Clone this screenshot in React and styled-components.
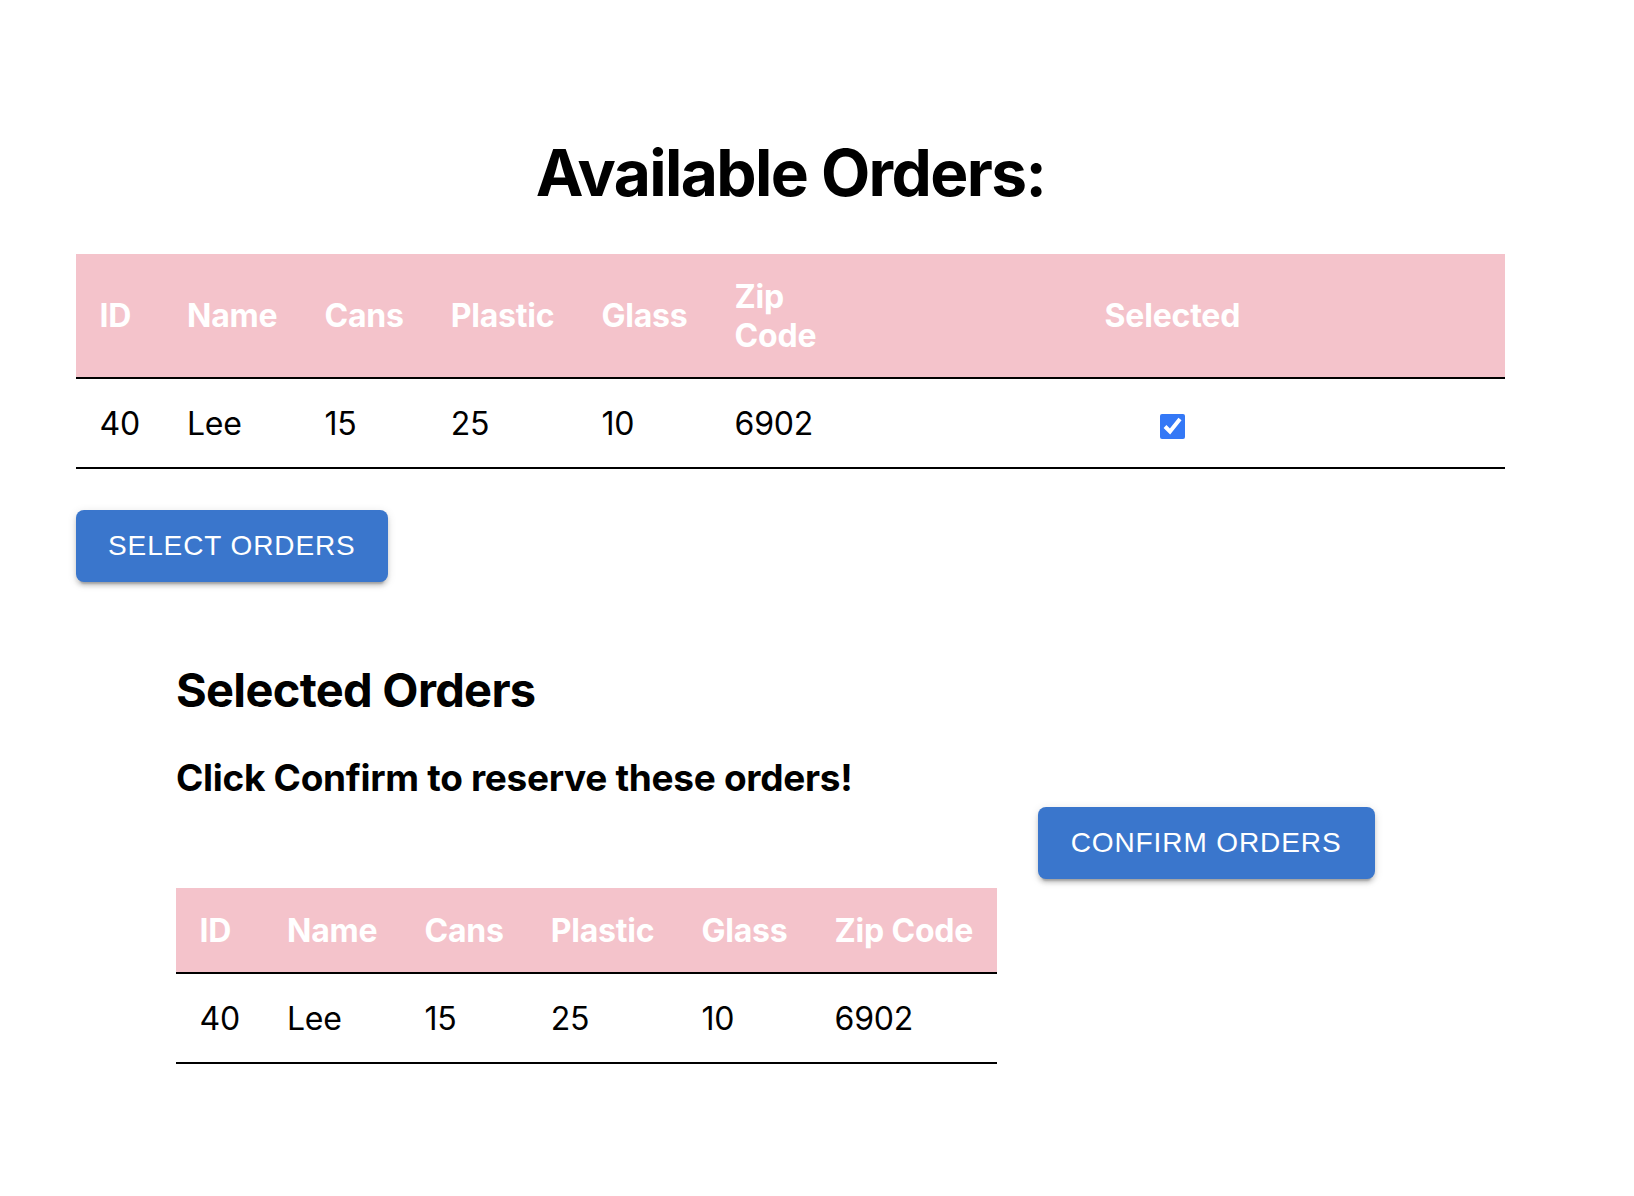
import React from "react";
import styled, { createGlobalStyle } from "styled-components";

const GlobalStyle = createGlobalStyle`
  html, body {
    margin: 0;
    padding: 0;
    background: #ffffff;
  }
  body {
    font-family: Inter, "Noto Sans", "DejaVu Sans", sans-serif;
    color: #000000;
  }
`;

const Page = styled.main`
  padding: 135px 0 120px 76px;
`;

const Container = styled.div`
  width: 1429px;
`;

const Title = styled.h1`
  margin: 0 0 42px;
  text-align: center;
  font-size: 64px;
  line-height: 1.2;
  font-weight: 700;
  letter-spacing: -1.6px;
`;

const Table = styled.table`
  border-collapse: collapse;
  width: ${(p) => (p.$full ? "100%" : "auto")};
`;

const HeadRow = styled.tr`
  background: #f4c3cb;
`;

const Th = styled.th`
  padding: 23px 23.5px 22px;
  font-size: 32px;
  line-height: 39px;
  font-weight: 700;
  letter-spacing: -0.2px;
  color: #ffffff;
  text-align: ${(p) => (p.$center ? "center" : "left")};
  border-bottom: 2px solid #000000;
  width: ${(p) => (p.$shrink ? "1%" : "auto")};
  vertical-align: middle;
`;

const Td = styled.td`
  padding: 25px 23.5px 24px;
  font-size: 32px;
  line-height: 39px;
  font-weight: 400;
  letter-spacing: -0.2px;
  text-align: ${(p) => (p.$center ? "center" : "left")};
  border-bottom: 2px solid #000000;
  vertical-align: middle;
`;

const Check = styled.input`
  width: 25px;
  height: 25px;
  margin: 0;
  accent-color: #3478f6;
  vertical-align: middle;
`;

const Button = styled.button`
  display: inline-flex;
  align-items: center;
  justify-content: center;
  height: 72px;
  padding: 0 ${(p) => p.$pad || 32}px;
  border: none;
  border-radius: 8px;
  background: #3a76cc;
  color: #ffffff;
  font-family: "Liberation Sans", Arial, sans-serif;
  font-size: 28px;
  font-weight: 400;
  letter-spacing: 0.9px;
  text-transform: uppercase;
  box-shadow: 0 6px 2px -4px rgba(0, 0, 0, 0.2), 0 4px 4px 0 rgba(0, 0, 0, 0.14),
    0 2px 10px 0 rgba(0, 0, 0, 0.12);
  cursor: pointer;
  flex-shrink: 0;
`;

const SelectBar = styled.div`
  margin-top: 41px;
`;

const SelectedSection = styled.section`
  display: flex;
  align-items: center;
  gap: 41px;
  margin-top: 40px;
  padding-left: 100px;
`;

const Column = styled.div`
  display: flex;
  flex-direction: column;
  align-items: flex-start;
`;

const SubTitle = styled.h2`
  margin: 40px 0 0;
  font-size: 47px;
  line-height: 1.2;
  font-weight: 700;
  letter-spacing: -0.7px;
`;

const Hint = styled.h3`
  margin: 38px 0 87px;
  font-size: 37px;
  line-height: 1.2;
  font-weight: 700;
  letter-spacing: -0.3px;
`;

const orders = [
  { id: 40, name: "Lee", cans: 15, plastic: 25, glass: 10, zip: 6902, selected: true },
];

const columns = ["ID", "Name", "Cans", "Plastic", "Glass", "Zip Code"];

function OrderCells({ order }) {
  return (
    <>
      <Td>{order.id}</Td>
      <Td>{order.name}</Td>
      <Td>{order.cans}</Td>
      <Td>{order.plastic}</Td>
      <Td>{order.glass}</Td>
      <Td>{order.zip}</Td>
    </>
  );
}

export default function App() {
  return (
    <>
      <GlobalStyle />
      <Page>
        <Container>
          <Title>Available Orders:</Title>
          <Table $full>
            <thead>
              <HeadRow>
                {columns.map((c) => (
                  <Th key={c} $shrink>
                    {c}
                  </Th>
                ))}
                <Th $center>Selected</Th>
              </HeadRow>
            </thead>
            <tbody>
              {orders.map((o) => (
                <tr key={o.id}>
                  <OrderCells order={o} />
                  <Td $center>
                    <Check type="checkbox" defaultChecked={o.selected} />
                  </Td>
                </tr>
              ))}
            </tbody>
          </Table>
          <SelectBar>
            <Button $pad={32}>Select Orders</Button>
          </SelectBar>
        </Container>
        <SelectedSection>
          <Column>
            <SubTitle>Selected Orders</SubTitle>
            <Hint>Click Confirm to reserve these orders!</Hint>
            <Table>
              <thead>
                <HeadRow>
                  {columns.map((c) => (
                    <Th key={c}>{c}</Th>
                  ))}
                </HeadRow>
              </thead>
              <tbody>
                {orders
                  .filter((o) => o.selected)
                  .map((o) => (
                    <tr key={o.id}>
                      <OrderCells order={o} />
                    </tr>
                  ))}
              </tbody>
            </Table>
          </Column>
          <Button $pad={33}>Confirm Orders</Button>
        </SelectedSection>
      </Page>
    </>
  );
}
